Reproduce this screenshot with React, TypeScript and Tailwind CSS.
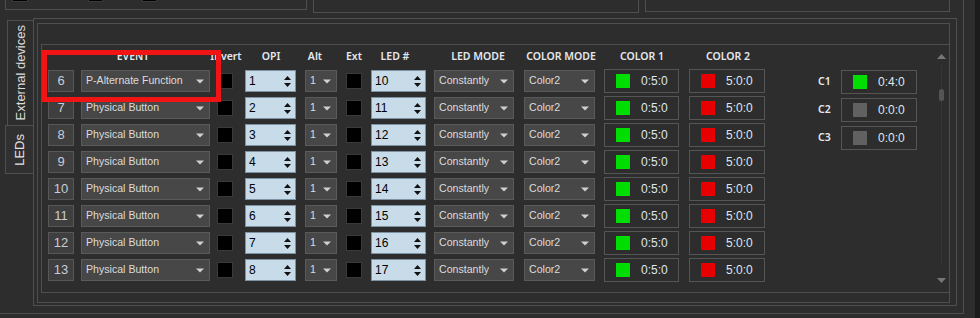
import React from "react";

const LINE = "border-[#4f4f4f]";

const rows = [6, 7, 8, 9, 10, 11, 12, 13].map((n, i) => ({
  num: n,
  event: i === 0 ? "P-Alternate Function" : "Physical Button",
  opi: i + 1,
  led: i + 10,
}));

function DownTri({ color = "#d0d0d0" }: { color?: string }) {
  return (
    <svg width="8" height="5" viewBox="0 0 8 5" className="shrink-0">
      <path d="M0 0.5 H8 L4 4.5 Z" fill={color} />
    </svg>
  );
}

function Dropdown({ w, text, ml }: { w: string; text: string; ml: string }) {
  return (
    <div
      className={`${w} ${ml} flex h-[22px] items-center justify-between border border-[#5a5a5a] bg-[#474747] pl-[4px] pr-[5px] text-[10.6px] text-[#dcdcdc]`}
    >
      <span className="truncate">{text}</span>
      <DownTri />
    </div>
  );
}

function Spin({ w, value, ml }: { w: string; value: number; ml: string }) {
  return (
    <div
      className={`${w} ${ml} flex h-[22px] items-center justify-between border border-[#7d93a3] bg-[#c7dce8] pl-[3px] pr-[4px] text-[12px] text-black`}
    >
      <span>{value}</span>
      <div className="flex flex-col gap-[3px]">
        <svg width="7" height="4" viewBox="0 0 7 4">
          <path d="M0 4 H7 L3.5 0 Z" fill="#111" />
        </svg>
        <svg width="7" height="4" viewBox="0 0 7 4">
          <path d="M0 0 H7 L3.5 4 Z" fill="#111" />
        </svg>
      </div>
    </div>
  );
}

function Check({ ml }: { ml: string }) {
  return <div className={`${ml} h-[16px] w-[16px] border border-[#3a3a3a] bg-black`} />;
}

function ColorBox({ color, text, w, ml }: { color: string; text: string; w: string; ml: string }) {
  return (
    <div className={`${w} ${ml} flex h-[24px] items-center border border-[#555] text-[12px] text-[#dfe6f0]`}>
      <div className="ml-[11px] h-[14px] w-[14px]" style={{ background: color }} />
      <span className="ml-[11px]">{text}</span>
    </div>
  );
}

function Head({ w, ml, children }: { w: string; ml: string; children: React.ReactNode }) {
  return (
    <div
      className={`${w} ${ml} whitespace-nowrap text-center font-['Noto_Sans',sans-serif] text-[10.5px] font-semibold text-[#e4e8ee]`}
    >
      {children}
    </div>
  );
}

export default function App() {
  return (
    <div className="relative h-[318px] w-[980px] overflow-hidden bg-[#2d2d2d] font-['Liberation_Sans',Arial,sans-serif]">
      <div className="flex h-full">
        <div className="h-full w-[975px]">
          {/* outer group */}
          <div className={`ml-[-2px] mt-[-30px] h-[344px] w-[966px] border ${LINE}`}>
            {/* top group boxes */}
            <div className="flex items-start">
              <div className={`ml-[6px] h-[39px] w-[302px] border ${LINE}`}>
                <div className="mt-[14px] flex">
                  <div className="ml-[6px] h-[16px] w-[16px] border border-[#3a3a3a] bg-black" />
                  <div className="ml-[60px] h-[16px] w-[15px] border border-[#3a3a3a] bg-black" />
                  <div className="ml-[39px] h-[16px] w-[15px] border border-[#3a3a3a] bg-black" />
                </div>
              </div>
              <div className={`ml-[6px] h-[42px] w-[326px] border ${LINE}`} />
              <div className={`ml-[6px] h-[41px] w-[305px] border ${LINE}`} />
            </div>

            {/* tab control */}
            <div className="mt-[5px] flex">
              <div className="flex w-[34px] flex-col items-end">
                <div
                  className={`mt-[2px] flex h-[105px] w-[26px] items-center justify-center border-l border-t ${LINE}`}
                >
                  <span className="rotate-180 whitespace-nowrap text-[13px] text-[#dcdcdc] [writing-mode:vertical-rl]">
                    External devices
                  </span>
                </div>
                <div
                  className={`flex h-[49px] w-[28px] items-center justify-center border-b border-l border-t ${LINE} bg-[#303030]`}
                >
                  <span className="rotate-180 whitespace-nowrap text-[13px] text-[#e2e2e2] [writing-mode:vertical-rl]">
                    LEDs
                  </span>
                </div>
              </div>

              <div className={`h-[288px] w-[924px] border ${LINE}`}>
                <div className={`ml-[3px] mt-[4px] h-[280px] w-[913px] border ${LINE}`}>
                  <div className={`ml-[3px] mt-[20px] flex h-[249px] w-[908px] border-b border-l border-t ${LINE}`}>
                    {/* table */}
                    <div className="flex w-[723px] flex-col">
                      <div className="flex h-[24px] items-center">
                        <Head w="w-[66px]" ml="ml-[58px]">EVENT</Head>
                        <Head w="w-[40px]" ml="ml-[40px]">Invert</Head>
                        <Head w="w-[40px]" ml="ml-[5px]">OPI</Head>
                        <Head w="w-[36px]" ml="ml-[6px]">Alt</Head>
                        <Head w="w-[32px]" ml="ml-[5px]">Ext</Head>
                        <Head w="w-[40px]" ml="ml-[5px]">LED #</Head>
                        <Head w="w-[80px]" ml="ml-[23px]">LED MODE</Head>
                        <Head w="w-[80px]" ml="ml-[3px]">COLOR MODE</Head>
                        <Head w="w-[70px]" ml="ml-[6px]">COLOR 1</Head>
                        <Head w="w-[70px]" ml="ml-[16px]">COLOR 2</Head>
                      </div>
                      <div className="flex flex-col gap-[3px]">
                        {rows.map((r) => (
                          <div key={r.num} className="flex h-[24px] items-center">
                            <div className="ml-[6px] flex h-[22px] w-[26px] items-center justify-center border border-[#575757] bg-[#3f3f3f] text-[13px] text-[#c8ced8]">
                              {r.num}
                            </div>
                            <Dropdown w="w-[129px]" ml="ml-[7px]" text={r.event} />
                            <Check ml="ml-[7px]" />
                            <Spin w="w-[51px]" ml="ml-[12px]" value={r.opi} />
                            <Dropdown w="w-[32px]" ml="ml-[9px]" text="1" />
                            <Check ml="ml-[9px]" />
                            <Spin w="w-[55px]" ml="ml-[9px]" value={r.led} />
                            <Dropdown w="w-[80px]" ml="ml-[8px]" text="Constantly" />
                            <Dropdown w="w-[71px]" ml="ml-[10px]" text="Color2" />
                            <ColorBox w="w-[75px]" ml="ml-[9px]" color="#00dd00" text="0:5:0" />
                            <ColorBox w="w-[76px]" ml="ml-[10px]" color="#e80000" text="5:0:0" />
                          </div>
                        ))}
                      </div>
                    </div>

                    {/* custom colours */}
                    <div className="ml-[53px] mt-[25px] flex flex-col gap-[4px]">
                      {[
                        { l: "C1", c: "#00dd00", t: "0:4:0" },
                        { l: "C2", c: "#616161", t: "0:0:0" },
                        { l: "C3", c: "#616161", t: "0:0:0" },
                      ].map((c) => (
                        <div key={c.l} className="flex h-[24px] items-center">
                          <span className="w-[23px] font-['Noto_Sans',sans-serif] text-[10.5px] font-semibold text-[#e4e8ee]">
                            {c.l}
                          </span>
                          <ColorBox w="w-[76px]" ml="ml-0" color={c.c} text={c.t} />
                        </div>
                      ))}
                    </div>

                    {/* scrollbar */}
                    <div className="ml-auto flex w-[16px] flex-col items-center pb-[9px] pt-[9px]">
                      <svg width="9" height="5" viewBox="0 0 9 5">
                        <path d="M0 5 H9 L4.5 0 Z" fill="#777" />
                      </svg>
                      <div className="flex flex-1 flex-col items-center">
                        <div className="mt-[6px] h-[24px] w-px bg-[#363636]" />
                        <div className="h-[12px] w-[5px] rounded-full bg-[#555]" />
                        <div className="mb-[14px] w-px flex-1 bg-[#363636]" />
                      </div>
                      <svg width="9" height="5" viewBox="0 0 9 5">
                        <path d="M0 0 H9 L4.5 5 Z" fill="#777" />
                      </svg>
                    </div>
                  </div>
                </div>
              </div>
            </div>
          </div>
        </div>
        <div className="h-full flex-1 bg-[#1c1c1c]" />
      </div>

      {/* highlight annotation */}
      <div className="absolute left-[42px] top-[50px] h-[52px] w-[179px] border-[5px] border-[#f01414]" />
    </div>
  );
}
